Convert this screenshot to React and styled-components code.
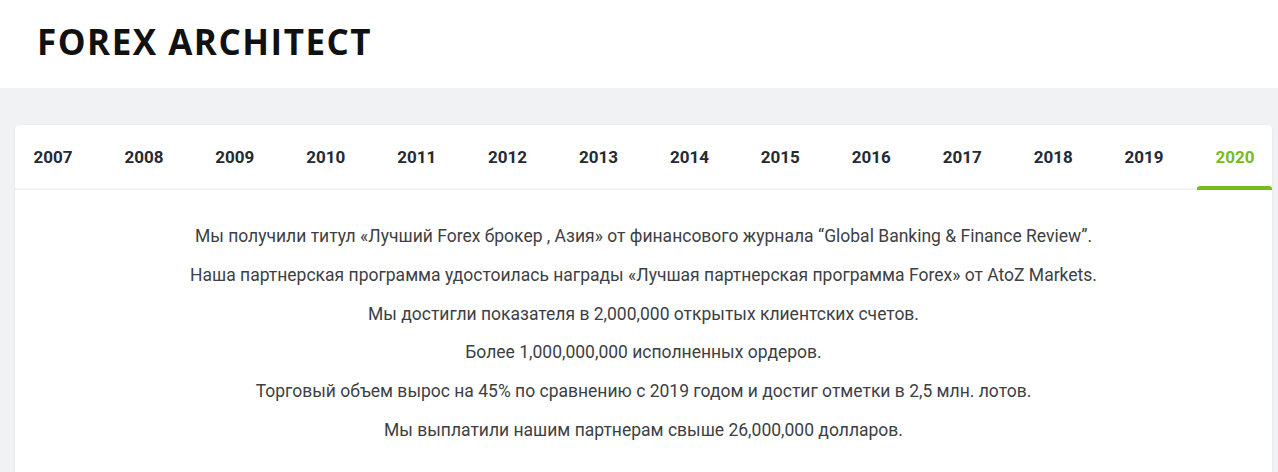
import React, { useState } from 'react'
import styled, { createGlobalStyle } from 'styled-components'

const GlobalStyle = createGlobalStyle`
  html, body {
    margin: 0;
    padding: 0;
    background: #f1f2f4;
    font-family: Roboto, 'Liberation Sans', sans-serif;
  }
`

const Header = styled.header`
  background: #fff;
  height: 88px;
  display: flex;
  align-items: center;
  padding-left: 37px;
  box-sizing: border-box;
`

const Logo = styled.div`
  font-family: 'Open Sans', 'Liberation Sans', sans-serif;
  font-weight: 700;
  font-size: 35px;
  letter-spacing: 1.5px;
  color: #111;
  padding-bottom: 5px;
`

const Main = styled.main`
  padding: 37px 6px 0 15px;
`

const Card = styled.section`
  background: #fff;
  border-radius: 4px;
  box-shadow: 0 0 3px rgba(0, 0, 0, 0.06);
  min-height: 360px;
`

const Tabs = styled.nav`
  display: flex;
  justify-content: space-between;
  height: 63px;
  border-bottom: 2px solid #f1f2f4;
`

const Tab = styled.button`
  position: relative;
  width: 75px;
  padding: 0 0 0 1px;
  border: 0;
  background: none;
  cursor: pointer;
  font-family: Roboto, sans-serif;
  font-weight: 700;
  font-size: 17px;
  color: ${p => (p.$active ? '#78bb20' : '#252a33')};

  &::after {
    content: '';
    display: ${p => (p.$active ? 'block' : 'none')};
    position: absolute;
    left: 0;
    right: 0;
    bottom: -2px;
    height: 4px;
    background: #78bb20;
    border-radius: 3px 3px 0 0;
  }
`

const Body = styled.div`
  padding-top: 36px;
  text-align: center;
`

const Line = styled.p`
  margin: 0 0 17.8px;
  font-size: 17.5px;
  line-height: 21px;
  color: #3d3f44;
`

const years = ['2007', '2008', '2009', '2010', '2011', '2012', '2013', '2014', '2015', '2016', '2017', '2018', '2019', '2020']

const lines = [
  'Мы получили титул «Лучший Forex брокер , Азия» от финансового журнала “Global Banking & Finance Review”.',
  'Наша партнерская программа удостоилась награды «Лучшая партнерская программа Forex» от AtoZ Markets.',
  'Мы достигли показателя в 2,000,000 открытых клиентских счетов.',
  'Более 1,000,000,000 исполненных ордеров.',
  'Торговый объем вырос на 45% по сравнению с 2019 годом и достиг отметки в 2,5 млн. лотов.',
  'Мы выплатили нашим партнерам свыше 26,000,000 долларов.',
]

export default function App() {
  const [active, setActive] = useState('2020')
  return (
    <>
      <GlobalStyle />
      <Header>
        <Logo>FOREX ARCHITECT</Logo>
      </Header>
      <Main>
        <Card>
          <Tabs>
            {years.map(y => (
              <Tab key={y} $active={y === active} onClick={() => setActive(y)}>{y}</Tab>
            ))}
          </Tabs>
          <Body>
            {lines.map(l => <Line key={l}>{l}</Line>)}
          </Body>
        </Card>
      </Main>
    </>
  )
}
